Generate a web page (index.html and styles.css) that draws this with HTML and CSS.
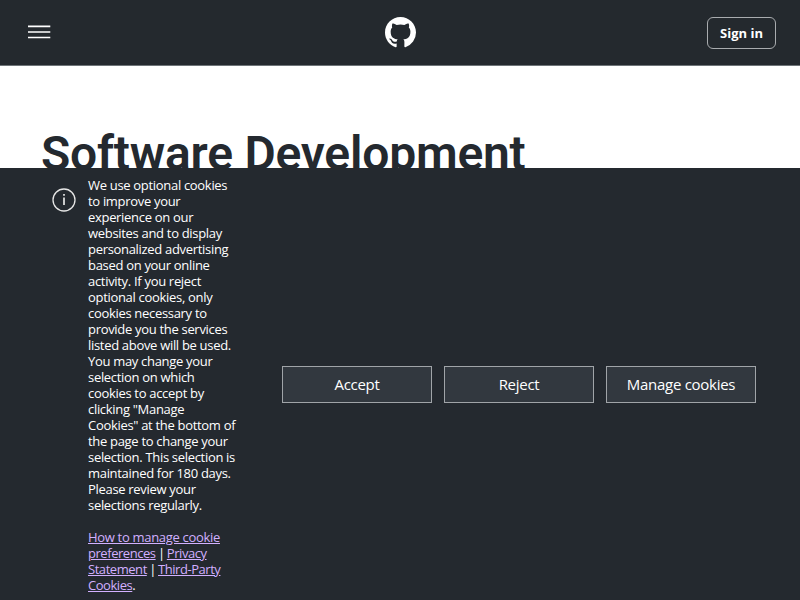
FILE: index.html
```html
<!DOCTYPE html>
<html lang="en">
<head>
<meta charset="utf-8">
<title>Software Development</title>
<link rel="stylesheet" href="styles.css">
</head>
<body>
<header class="topbar">
  <button class="menu" aria-label="Menu">
    <svg width="23" height="14" viewBox="0 0 23 14"><path d="M0 1.4h22.3M0 7h22.3M0 12.5h22.3" stroke="#fff" stroke-width="1.6"/></svg>
  </button>
  <a class="logo" aria-label="GitHub">
    <svg width="31" height="31" viewBox="0 0 16 16" fill="#fff"><path d="M8 0C3.58 0 0 3.58 0 8c0 3.54 2.29 6.53 5.47 7.59.4.07.55-.17.55-.38 0-.19-.01-.82-.01-1.49-2.01.37-2.53-.49-2.69-.94-.09-.23-.48-.94-.82-1.13-.28-.15-.68-.52-.01-.53.63-.01 1.08.58 1.23.82.72 1.21 1.87.87 2.33.66.07-.52.28-.87.51-1.07-1.78-.2-3.64-.89-3.64-3.95 0-.87.31-1.59.82-2.15-.08-.2-.36-1.02.08-2.12 0 0 .67-.21 2.2.82.64-.18 1.32-.27 2-.27s1.36.09 2 .27c1.53-1.04 2.2-.82 2.2-.82.44 1.1.16 1.92.08 2.12.51.56.82 1.27.82 2.15 0 3.07-1.87 3.75-3.65 3.95.29.25.54.73.54 1.48 0 1.07-.01 1.93-.01 2.2 0 .21.15.46.55.38A8.01 8.01 0 0 0 16 8c0-4.42-3.58-8-8-8z"/></svg>
  </a>
  <a class="signin">Sign in</a>
</header>
<main class="page"><h1>Software Development</h1></main>
<section class="banner">
  <svg class="info" width="24" height="24" viewBox="0 0 24 24"><circle cx="12" cy="12" r="11" fill="none" stroke="#e6e6e6" stroke-width="1.3"/><path d="M12 9.4v7.6M12 6v1.8" stroke="#e6e6e6" stroke-width="1.7"/></svg>
  <div class="message">
    <p>We use optional cookies<br>to improve your<br>experience on our<br>websites and to display<br>personalized advertising<br>based on your online<br>activity. If you reject<br>optional cookies, only<br>cookies necessary to<br>provide you the services<br>listed above will be used.<br>You may change your<br>selection on which<br>cookies to accept by<br>clicking "Manage<br>Cookies" at the bottom of<br>the page to change your<br>selection. This selection is<br>maintained for 180 days.<br>Please review your<br>selections regularly.</p>
    <p><a>How to manage cookie<br><span class="tight">preferences</span></a><span class="sep"> | </span><a class="tight">Privacy<br>Statement</a><span class="sep"> | </span><a class="tight">Third-Party<br>Cookies</a>.</p>
  </div>
  <div class="actions">
    <button>Accept</button>
    <button>Reject</button>
    <button>Manage cookies</button>
  </div>
</section>
</body>
</html>
```
FILE: styles.css
```css
* { box-sizing: border-box; }
body {
  margin: 0;
  height: 600px;
  overflow: hidden;
  background: #fff;
  color: #24292f;
  font-family: "Open Sans", "Noto Sans", sans-serif;
}
.topbar {
  height: 66px;
  padding: 0 24px 0 28px;
  display: grid;
  grid-template-columns: 1fr 32px 1fr;
  align-items: center;
  background: #24292e;
  border-bottom: 1px solid #6e7478;
}
.menu {
  justify-self: start;
  display: flex;
  padding: 0;
  margin-bottom: 1px;
  border: 0;
  background: none;
}
.logo { display: flex; margin: 0 0 1px -1px; }
.signin {
  justify-self: end;
  width: 69px;
  height: 32px;
  border: 1px solid #a9acaf;
  border-radius: 6px;
  color: #fff;
  font-size: 13px;
  font-weight: 700;
  line-height: 31px;
  text-align: center;
  letter-spacing: 0;
}
.page { padding: 62px 41px 0; }
h1 {
  margin: 0;
  font-family: Roboto, sans-serif;
  font-size: 48px;
  font-weight: 600;
  line-height: 52px;
  letter-spacing: -0.22px;
  white-space: nowrap;
}
.banner {
  position: fixed;
  top: 168px;
  left: 0;
  right: 0;
  bottom: 0;
  display: flex;
  padding: 9px 44px 7px 52px;
  background: #24292f;
  color: #fff;
}
.info { flex: none; margin: 11px 12px 0 0; }
.message {
  flex: none;
  width: 152px;
  margin-right: 42px;
  font-size: 13px;
  line-height: 16px;
  letter-spacing: -0.31px;
  white-space: nowrap;
}
.message p { margin: 0 0 16px; }
.message a { color: #d2b0ff; text-decoration: underline; }
.message .tight { letter-spacing: -0.45px; }
.message .sep { letter-spacing: -0.9px; }
.actions {
  flex: 1;
  display: grid;
  grid-template-columns: repeat(3, 1fr);
  gap: 12px;
  align-self: center;
  margin-bottom: 2px;
}
.actions button {
  height: 37px;
  padding: 0;
  border: 1px solid #a0a4a8;
  background: #32383f;
  color: #fff;
  font: 15px "Open Sans", sans-serif;
  letter-spacing: -0.28px;
}
```
